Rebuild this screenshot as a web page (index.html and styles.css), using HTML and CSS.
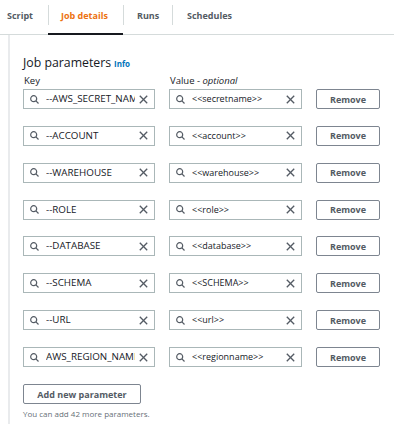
FILE: index.html
```html
<!DOCTYPE html>
<html lang="en">
<head>
<meta charset="utf-8">
<title>Job details</title>
<link rel="stylesheet" href="styles.css">
</head>
<body>
<nav class="tabs">
  <div class="tab tab-first">Script</div>
  <div class="tab tab-active">Job details</div>
  <div class="tab tab-runs">Runs</div>
  <div class="tab tab-last">Schedules</div>
</nav>
<main class="content">
  <h2 class="heading">Job parameters <span class="info">Info</span></h2>
  <div class="labels">
    <span>Key</span>
    <span>Value - <em>optional</em></span>
  </div>
  <div class="rows">
    <div class="row">
      <div class="field"><svg class="ico" viewBox="0 0 9 9"><circle cx="3.7" cy="3.7" r="3"/><line x1="5.9" y1="5.9" x2="8.5" y2="8.5"/></svg><span class="val key">--AWS_SECRET_NAME</span><svg class="clr" viewBox="0 0 9 9"><line x1="0.8" y1="0.8" x2="8.2" y2="8.2"/><line x1="8.2" y1="0.8" x2="0.8" y2="8.2"/></svg></div>
      <div class="field"><svg class="ico" viewBox="0 0 9 9"><circle cx="3.7" cy="3.7" r="3"/><line x1="5.9" y1="5.9" x2="8.5" y2="8.5"/></svg><span class="val">&lt;&lt;secretname&gt;&gt;</span><svg class="clr" viewBox="0 0 9 9"><line x1="0.8" y1="0.8" x2="8.2" y2="8.2"/><line x1="8.2" y1="0.8" x2="0.8" y2="8.2"/></svg></div>
      <button class="btn">Remove</button>
    </div>
    <div class="row">
      <div class="field"><svg class="ico" viewBox="0 0 9 9"><circle cx="3.7" cy="3.7" r="3"/><line x1="5.9" y1="5.9" x2="8.5" y2="8.5"/></svg><span class="val key">--ACCOUNT</span><svg class="clr" viewBox="0 0 9 9"><line x1="0.8" y1="0.8" x2="8.2" y2="8.2"/><line x1="8.2" y1="0.8" x2="0.8" y2="8.2"/></svg></div>
      <div class="field"><svg class="ico" viewBox="0 0 9 9"><circle cx="3.7" cy="3.7" r="3"/><line x1="5.9" y1="5.9" x2="8.5" y2="8.5"/></svg><span class="val">&lt;&lt;account&gt;&gt;</span><svg class="clr" viewBox="0 0 9 9"><line x1="0.8" y1="0.8" x2="8.2" y2="8.2"/><line x1="8.2" y1="0.8" x2="0.8" y2="8.2"/></svg></div>
      <button class="btn">Remove</button>
    </div>
    <div class="row">
      <div class="field"><svg class="ico" viewBox="0 0 9 9"><circle cx="3.7" cy="3.7" r="3"/><line x1="5.9" y1="5.9" x2="8.5" y2="8.5"/></svg><span class="val key">--WAREHOUSE</span><svg class="clr" viewBox="0 0 9 9"><line x1="0.8" y1="0.8" x2="8.2" y2="8.2"/><line x1="8.2" y1="0.8" x2="0.8" y2="8.2"/></svg></div>
      <div class="field"><svg class="ico" viewBox="0 0 9 9"><circle cx="3.7" cy="3.7" r="3"/><line x1="5.9" y1="5.9" x2="8.5" y2="8.5"/></svg><span class="val">&lt;&lt;warehouse&gt;&gt;</span><svg class="clr" viewBox="0 0 9 9"><line x1="0.8" y1="0.8" x2="8.2" y2="8.2"/><line x1="8.2" y1="0.8" x2="0.8" y2="8.2"/></svg></div>
      <button class="btn">Remove</button>
    </div>
    <div class="row">
      <div class="field"><svg class="ico" viewBox="0 0 9 9"><circle cx="3.7" cy="3.7" r="3"/><line x1="5.9" y1="5.9" x2="8.5" y2="8.5"/></svg><span class="val key">--ROLE</span><svg class="clr" viewBox="0 0 9 9"><line x1="0.8" y1="0.8" x2="8.2" y2="8.2"/><line x1="8.2" y1="0.8" x2="0.8" y2="8.2"/></svg></div>
      <div class="field"><svg class="ico" viewBox="0 0 9 9"><circle cx="3.7" cy="3.7" r="3"/><line x1="5.9" y1="5.9" x2="8.5" y2="8.5"/></svg><span class="val">&lt;&lt;role&gt;&gt;</span><svg class="clr" viewBox="0 0 9 9"><line x1="0.8" y1="0.8" x2="8.2" y2="8.2"/><line x1="8.2" y1="0.8" x2="0.8" y2="8.2"/></svg></div>
      <button class="btn">Remove</button>
    </div>
    <div class="row">
      <div class="field"><svg class="ico" viewBox="0 0 9 9"><circle cx="3.7" cy="3.7" r="3"/><line x1="5.9" y1="5.9" x2="8.5" y2="8.5"/></svg><span class="val key">--DATABASE</span><svg class="clr" viewBox="0 0 9 9"><line x1="0.8" y1="0.8" x2="8.2" y2="8.2"/><line x1="8.2" y1="0.8" x2="0.8" y2="8.2"/></svg></div>
      <div class="field"><svg class="ico" viewBox="0 0 9 9"><circle cx="3.7" cy="3.7" r="3"/><line x1="5.9" y1="5.9" x2="8.5" y2="8.5"/></svg><span class="val">&lt;&lt;database&gt;&gt;</span><svg class="clr" viewBox="0 0 9 9"><line x1="0.8" y1="0.8" x2="8.2" y2="8.2"/><line x1="8.2" y1="0.8" x2="0.8" y2="8.2"/></svg></div>
      <button class="btn">Remove</button>
    </div>
    <div class="row">
      <div class="field"><svg class="ico" viewBox="0 0 9 9"><circle cx="3.7" cy="3.7" r="3"/><line x1="5.9" y1="5.9" x2="8.5" y2="8.5"/></svg><span class="val key">--SCHEMA</span><svg class="clr" viewBox="0 0 9 9"><line x1="0.8" y1="0.8" x2="8.2" y2="8.2"/><line x1="8.2" y1="0.8" x2="0.8" y2="8.2"/></svg></div>
      <div class="field"><svg class="ico" viewBox="0 0 9 9"><circle cx="3.7" cy="3.7" r="3"/><line x1="5.9" y1="5.9" x2="8.5" y2="8.5"/></svg><span class="val">&lt;&lt;SCHEMA&gt;&gt;</span><svg class="clr" viewBox="0 0 9 9"><line x1="0.8" y1="0.8" x2="8.2" y2="8.2"/><line x1="8.2" y1="0.8" x2="0.8" y2="8.2"/></svg></div>
      <button class="btn">Remove</button>
    </div>
    <div class="row">
      <div class="field"><svg class="ico" viewBox="0 0 9 9"><circle cx="3.7" cy="3.7" r="3"/><line x1="5.9" y1="5.9" x2="8.5" y2="8.5"/></svg><span class="val key">--URL</span><svg class="clr" viewBox="0 0 9 9"><line x1="0.8" y1="0.8" x2="8.2" y2="8.2"/><line x1="8.2" y1="0.8" x2="0.8" y2="8.2"/></svg></div>
      <div class="field"><svg class="ico" viewBox="0 0 9 9"><circle cx="3.7" cy="3.7" r="3"/><line x1="5.9" y1="5.9" x2="8.5" y2="8.5"/></svg><span class="val">&lt;&lt;url&gt;&gt;</span><svg class="clr" viewBox="0 0 9 9"><line x1="0.8" y1="0.8" x2="8.2" y2="8.2"/><line x1="8.2" y1="0.8" x2="0.8" y2="8.2"/></svg></div>
      <button class="btn">Remove</button>
    </div>
    <div class="row">
      <div class="field"><svg class="ico" viewBox="0 0 9 9"><circle cx="3.7" cy="3.7" r="3"/><line x1="5.9" y1="5.9" x2="8.5" y2="8.5"/></svg><span class="val key">AWS_REGION_NAME</span><svg class="clr" viewBox="0 0 9 9"><line x1="0.8" y1="0.8" x2="8.2" y2="8.2"/><line x1="8.2" y1="0.8" x2="0.8" y2="8.2"/></svg></div>
      <div class="field"><svg class="ico" viewBox="0 0 9 9"><circle cx="3.7" cy="3.7" r="3"/><line x1="5.9" y1="5.9" x2="8.5" y2="8.5"/></svg><span class="val">&lt;&lt;regionname&gt;&gt;</span><svg class="clr" viewBox="0 0 9 9"><line x1="0.8" y1="0.8" x2="8.2" y2="8.2"/><line x1="8.2" y1="0.8" x2="0.8" y2="8.2"/></svg></div>
      <button class="btn">Remove</button>
    </div>
  </div>
  <button class="btn btn-add">Add new parameter</button>
  <p class="hint">You can add 42 more parameters.</p>
</main>
</body>
</html>
```
FILE: styles.css
```css
* { box-sizing: border-box; }
body {
  margin: 0;
  background: #ffffff;
  font-family: "Open Sans", "Liberation Sans", sans-serif;
  color: #16191f;
}
.tabs {
  display: flex;
  width: 394px;
  height: 35px;
  border-bottom: 1px solid #d5dbdb;
}
.tab {
  position: relative;
  height: 35px;
  padding-left: 13px;
  display: flex;
  align-items: center;
  padding-bottom: 5px;
  font-size: 9px;
  font-weight: 700;
  color: #545b64;
}
.tab + .tab::before {
  content: "";
  position: absolute;
  left: 0;
  top: 5px;
  width: 1px;
  height: 20px;
  background: #d5dbdb;
}
.tab-first { width: 48px; padding-left: 7px; }
.tab-active {
  width: 75px;
  color: #ec7211;
  border-bottom: 2px solid #16191f;
  padding-bottom: 3px;
}
.tab-runs { width: 49px; padding-left: 14px; }
.tab-last { padding-left: 15px; }
.content {
  margin-left: 8px;
  border-left: 2px solid #e9ebed;
  padding: 19px 0 20px 13px;
}
.heading {
  margin: 0;
  font-size: 12.3px;
  line-height: 17px;
  font-weight: 400;
  display: flex;
  align-items: baseline;
  gap: 3px;
}
.info {
  font-size: 8px;
  font-weight: 700;
  color: #0073bb;
}
.labels {
  display: grid;
  grid-template-columns: 132px 133px;
  column-gap: 14px;
  margin-top: 2px;
  font-size: 9.5px;
  line-height: 13px;
  padding-left: 1px;
}
.labels em { font-style: italic; }
.rows {
  margin-top: 2px;
  display: flex;
  flex-direction: column;
  gap: 16.86px;
}
.row {
  display: grid;
  grid-template-columns: 132px 133px 64px;
  column-gap: 14px;
  height: 20px;
}
.field {
  display: flex;
  align-items: center;
  height: 20px;
  border: 1px solid #aab7b8;
  padding: 0 6px;
  background: #fff;
}
.ico, .clr {
  flex: none;
  width: 9px;
  height: 9px;
  fill: none;
  stroke: #545b64;
}
.ico { stroke-width: 1.2; }
.clr { stroke-width: 1.3; }
.val {
  flex: 1;
  min-width: 0;
  margin: 0 4px 0 7px;
  overflow: hidden;
  white-space: nowrap;
  font-size: 9px;
  line-height: 12px;
  color: #16191f;
}
.val.key { font-size: 9.8px; }
.btn {
  height: 20px;
  border: 1px solid #7d8590;
  border-radius: 2px;
  background: #fff;
  font-family: inherit;
  font-size: 9px;
  font-weight: 700;
  color: #545b64;
  padding: 0;
}
.btn-add {
  display: block;
  margin-top: 17px;
  width: 118px;
}
.hint {
  margin: 4px 0 0;
  font-size: 8px;
  line-height: 11px;
  color: #687078;
}
```
